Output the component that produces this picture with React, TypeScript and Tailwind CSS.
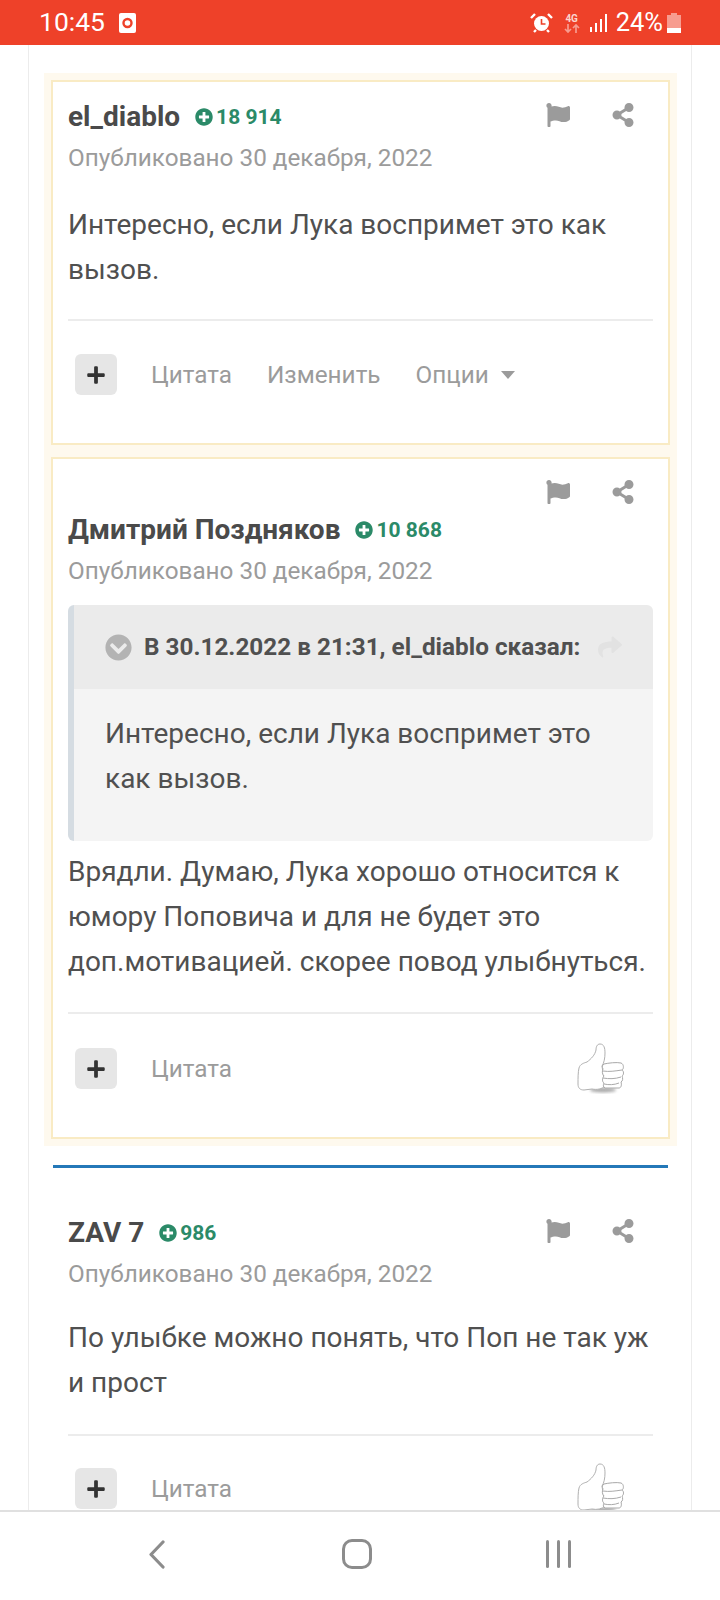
import type { ReactNode } from 'react';
import { FaChevronCircleDown, FaFlag, FaPlus, FaPlusCircle, FaShare, FaShareAlt } from 'react-icons/fa';

function StatusBar() {
  return (
    <div className="flex h-[45px] shrink-0 items-center bg-[#ee4129] pl-[39px] pr-[39px] text-white">
      <span className="text-[26.5px] leading-none">10:45</span>
      <svg className="ml-[14px]" width="17" height="20" viewBox="0 0 17 20">
        <rect width="17" height="20" rx="2" fill="#fff" />
        <circle cx="8.5" cy="10" r="4" fill="none" stroke="#ee4129" strokeWidth="2.4" />
      </svg>
      <div className="ml-auto flex items-center">
        <svg width="23" height="22" viewBox="0 0 23 22">
          <circle cx="11.5" cy="11.5" r="7.5" fill="#fff" />
          <path d="M11.5 7v5h4" fill="none" stroke="#ee4129" strokeWidth="1.6" />
          <path d="M1 6l4-4M22 6l-4-4M4 20l2-2M19 20l-2-2" stroke="#fff" strokeWidth="2.4" />
        </svg>
        <div className="ml-[11px] flex w-[16px] flex-col items-center">
          <span className="text-[10px] font-bold leading-[11px] text-[#fbd5cf]">4G</span>
          <svg width="16" height="9" viewBox="0 0 16 9">
            <path d="M4 0v8M1 5l3 3 3-3" fill="none" stroke="#f79c8f" strokeWidth="1.7" />
            <path d="M12 9V1M9 4l3-3 3 3" fill="none" stroke="#f79c8f" strokeWidth="1.7" />
          </svg>
        </div>
        <svg className="ml-[9px]" width="20" height="20" viewBox="0 0 20 20">
          <path d="M1 14h2v5H1zM6 10h2v9H6zM11 6h2v13h-2zM16 1h2v18h-2z" fill="#fff" />
        </svg>
        <span className="ml-[7px] text-[25.5px] leading-none">24%</span>
        <svg className="ml-[4px]" width="14" height="20" viewBox="0 0 14 20">
          <path d="M4 0h6v2h4v18H0V2h4z" fill="#f79c8f" />
          <path d="M0 15h14v5H0z" fill="#fff" />
        </svg>
      </div>
    </div>
  );
}

function ThumbUp() {
  return (
    <svg width="50" height="52" viewBox="0 0 50 52">
      <defs>
        <filter id="soft" x="-20%" y="-20%" width="140%" height="140%">
          <feGaussianBlur stdDeviation="1.5" />
        </filter>
      </defs>
      <ellipse cx="27" cy="47" rx="13" ry="2.5" fill="#aaa" filter="url(#soft)" />
      <path
        d="M3 25c1-4 5-5 8-6 4-3 8-7 9-12 0-3 1-6 4-6 4 0 5 4 5 9 0 5-1 10-3 13l3 20c-3 3-8 4-13 3l-8 1c-4 0-6-2-6-6 0-6 0-12 1-16z"
        fill="#fff"
        stroke="#b0b0b0"
        strokeWidth="1"
      />
      <path
        d="M28 21c4-1 13-2 17-1 3 1 3 6 1 7 2 1 2 5 0 6 1 2 1 5-1 6 1 3 0 6-2 6H29c-2-1-2-3-1-5-2-1-2-5 0-7-2-2-2-5-1-7-1-2-1-4 1-5z"
        fill="#fff"
        stroke="#a8a8a8"
        strokeWidth="1"
      />
      <path d="M27 28c6 1 12 0 19-1M27 35c6 1 12 1 18-1M28 41c5 1 10 1 15-1" fill="none" stroke="#aaa" strokeWidth="1" />
    </svg>
  );
}

function Actions({ labels, caret, thumb }: { labels: string[]; caret?: boolean; thumb?: boolean }) {
  return (
    <div className="flex h-[41px] items-center pl-[7px]">
      <div className="flex h-[41px] w-[42px] shrink-0 items-center justify-center rounded-[6px] bg-[#e6e6e6] text-[#333]">
        <FaPlus size={20} />
      </div>
      <div className="ml-[34px] flex items-center gap-[35px] pt-[2px] text-[24.3px] leading-none text-[#9b9b9b]">
        {labels.map((label) => (
          <span key={label}>{label}</span>
        ))}
      </div>
      {caret ? <span className="ml-[12px] h-0 w-0 border-x-[7.5px] border-t-[8px] border-x-transparent border-t-[#9b9b9b]" /> : null}
      {thumb ? (
        <div className="ml-auto mr-[27px]">
          <ThumbUp />
        </div>
      ) : null}
    </div>
  );
}

function Tools() {
  return (
    <div className="flex items-center gap-[41px] pr-[18px] text-[#9b9b9b]">
      <FaFlag size={24} />
      <FaShareAlt size={24} />
    </div>
  );
}

function Author({ name, rep }: { name: string; rep: string }) {
  return (
    <div className="flex items-center">
      <span className="text-[28px] font-bold leading-[36px] text-[#4a4a4a]">{name}</span>
      <span className="ml-[15px] flex items-center gap-[3px] text-[21px] font-bold leading-none text-[#2b8a68]">
        <FaPlusCircle size={18} />
        {rep}
      </span>
    </div>
  );
}

function Published() {
  return <div className="mt-[5px] text-[24.3px] leading-[36px] text-[#9b9b9b]">Опубликовано 30 декабря, 2022</div>;
}

function Body({ children }: { children: ReactNode }) {
  return <p className="text-[28px] leading-[45px] text-[#505050]">{children}</p>;
}

function Highlighted({ children }: { children: ReactNode }) {
  return (
    <div className="bg-[#fef9ee] p-[7px]">
      <div className="border-2 border-[#f9ebc4] bg-white px-[15px]">{children}</div>
    </div>
  );
}

export default function App() {
  return (
    <div className="flex h-[1600px] w-[720px] flex-col overflow-hidden bg-white" style={{ fontFamily: 'Roboto, sans-serif' }}>
      <StatusBar />
      <main className="mx-[28px] min-h-0 flex-1 overflow-hidden border-x border-[#ececec] pl-[15px] pr-[14px] pt-[28px]">
        <Highlighted>
          <div className="flex items-start justify-between pt-[15px]">
            <div className="mt-[2px]">
              <Author name="el_diablo" rep="18 914" />
            </div>
            <div className="mt-[6px]">
              <Tools />
            </div>
          </div>
          <Published />
          <div className="mt-[26px]">
            <Body>Интересно, если Лука воспримет это как вызов.</Body>
          </div>
          <div className="mt-[27px] h-[2px] bg-[#ececec]" />
          <div className="mb-[48px] mt-[33px]">
            <Actions labels={['Цитата', 'Изменить', 'Опции']} caret />
          </div>
        </Highlighted>
        <div className="-mt-[2px]">
          <Highlighted>
            <div className="pt-[21px]">
              <div className="flex justify-end">
                <Tools />
              </div>
              <div className="mt-[8px]">
                <Author name="Дмитрий Поздняков" rep="10 868" />
              </div>
              <Published />
              <div className="mt-[16px] overflow-hidden rounded-[6px] border-l-[6px] border-[#d5dce2]">
                <div className="flex h-[84px] items-center bg-[#ebebeb] pl-[31px]">
                  <FaChevronCircleDown size={27} className="text-[#b3b3b3]" />
                  <span className="ml-[12px] text-[24.3px] font-bold leading-none text-[#505050]">В 30.12.2022 в 21:31, el_diablo сказал:</span>
                  <FaShare size={24} className="ml-[18px] text-[#e2e2e2]" />
                </div>
                <div className="bg-[#f4f4f4] pb-[40px] pl-[31px] pr-[20px] pt-[22px]">
                  <Body>Интересно, если Лука воспримет это как вызов.</Body>
                </div>
              </div>
              <div className="mt-[8px]">
                <Body>Врядли. Думаю, Лука хорошо относится к юмору Поповича и для не будет это доп.мотивацией. скорее повод улыбнуться.</Body>
              </div>
              <div className="mt-[28px] h-[2px] bg-[#ececec]" />
              <div className="mb-[48px] mt-[34px]">
                <Actions labels={['Цитата']} thumb />
              </div>
            </div>
          </Highlighted>
        </div>
        <div className="ml-[9px] mr-[9px] mt-[19px] h-[3px] bg-[#2478b8]" />
        <div className="px-[24px] pt-[45px]">
          <div className="flex items-start justify-between">
            <div className="mt-[2px]">
              <Author name="ZAV 7" rep="986" />
            </div>
            <div className="mt-[6px]">
              <Tools />
            </div>
          </div>
          <Published />
          <div className="mt-[23px]">
            <Body>По улыбке можно понять, что Поп не так уж и прост</Body>
          </div>
          <div className="mt-[29px] h-[2px] bg-[#ececec]" />
          <div className="mt-[32px]">
            <Actions labels={['Цитата']} thumb />
          </div>
        </div>
      </main>
      <nav className="flex h-[90px] shrink-0 items-center border-t-2 border-[#e0e0e0] bg-white pb-[4px]">
        <svg className="ml-[148px]" width="17" height="29" viewBox="0 0 17 29">
          <path d="M15 2L3 14.5 15 27" fill="none" stroke="#8c8c8c" strokeWidth="3.2" strokeLinecap="round" strokeLinejoin="round" />
        </svg>
        <div className="ml-[177px] h-[30px] w-[30px] rounded-[10px] border-[3px] border-[#8c8c8c]" />
        <div className="ml-[174px] flex gap-[8px]">
          <span className="h-[28px] w-[3px] rounded-full bg-[#8c8c8c]" />
          <span className="h-[28px] w-[3px] rounded-full bg-[#8c8c8c]" />
          <span className="h-[28px] w-[3px] rounded-full bg-[#8c8c8c]" />
        </div>
      </nav>
    </div>
  );
}
